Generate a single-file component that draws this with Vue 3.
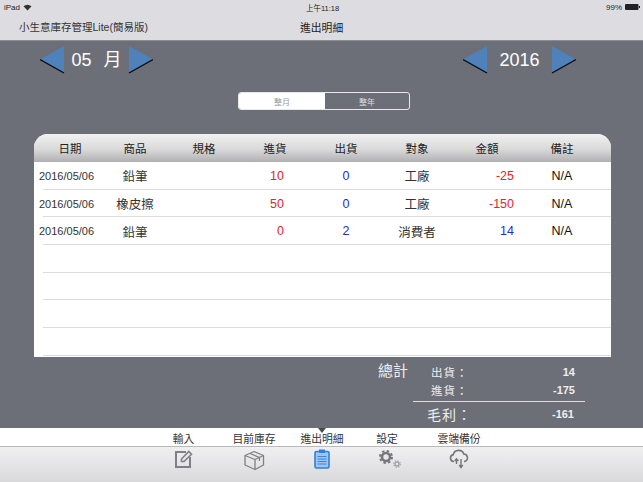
<template>
  <div class="page">
    <!-- 狀態列 -->
    <div class="status">
      <div class="status-left">
        <span>iPad</span>
        <svg width="9" height="7" viewBox="0 0 9 7"><path d="M0.5 2.2 A6 6 0 0 1 8.5 2.2 L4.5 6.5 Z" fill="#333" /></svg>
      </div>
      <span class="status-time">上午11:18</span>
      <div class="status-right">
        <span>99%</span>
        <svg width="15" height="6" viewBox="0 0 15 6"><rect x="0" y="0" width="13.5" height="6" rx="1" fill="#222" /><rect x="14" y="2" width="1" height="2" fill="#222" /></svg>
      </div>
    </div>
    <div class="titlebar">
      <span class="app-name">小生意庫存管理Lite(簡易版)</span>
      <span class="title">進出明細</span>
    </div>

    <div class="main">
      <div class="pickers">
        <div class="picker">
          <svg class="arrow" width="25" height="28" viewBox="0 0 25 28"><polygon points="0,13.5 24,0 24,27" fill="#4f82ba" /><path d="M0 13.5 L24 27" stroke="#0b0b0d" stroke-width="1.4" /></svg>
          <div class="month"><span>05</span><span>月</span></div>
          <svg class="arrow" width="25" height="28" viewBox="0 0 25 28"><polygon points="1,0 25,13.5 1,27" fill="#4f82ba" /><path d="M25 13.5 L1 27" stroke="#0b0b0d" stroke-width="1.4" /></svg>
        </div>
        <div class="picker">
          <svg class="arrow" width="25" height="28" viewBox="0 0 25 28"><polygon points="0,13.5 24,0 24,27" fill="#4f82ba" /><path d="M0 13.5 L24 27" stroke="#0b0b0d" stroke-width="1.4" /></svg>
          <span class="year">2016</span>
          <svg class="arrow" width="25" height="28" viewBox="0 0 25 28"><polygon points="1,0 25,13.5 1,27" fill="#4f82ba" /><path d="M25 13.5 L1 27" stroke="#0b0b0d" stroke-width="1.4" /></svg>
        </div>
      </div>

      <div class="segment">
        <div class="seg seg-on">整月</div>
        <div class="seg">整年</div>
      </div>

      <div class="table">
        <div class="row head">
          <span v-for="h in headers" :key="h">{{ h }}</span>
        </div>
        <div v-for="(r, i) in rows" :key="i" class="row line">
          <span class="date">{{ r.date }}</span>
          <span>{{ r.item }}</span>
          <span></span>
          <span class="in">{{ r.inQty }}</span>
          <span class="out">{{ r.outQty }}</span>
          <span>{{ r.who }}</span>
          <span class="amount" :class="r.amount < 0 ? 'neg' : 'pos'">{{ r.amount }}</span>
          <span class="note">N/A</span>
        </div>
        <div v-for="n in 4" :key="'e' + n" class="row line"></div>
      </div>

      <div class="summary">
        <div class="total-label">總計</div>
        <div class="total-box">
          <div class="total-row"><span class="k">出貨：</span><span>14</span></div>
          <div class="total-row"><span class="k">進貨：</span><span>-175</span></div>
          <div class="total-row profit"><span class="k">毛利：</span><span>-161</span></div>
        </div>
      </div>
    </div>

    <div class="tabs">
      <span class="pointer"></span>
      <div class="tab">
        <span>輸入</span>
        <svg width="20" height="20" viewBox="0 0 20 20" fill="none" stroke="#808084">
          <path d="M12 3 H2 V18 H16 V8" stroke-width="2" />
          <path d="M7.5 10 L14.8 2.5 L17.5 5.2 L10 12.5 H7.5 Z" stroke-width="1.6" />
        </svg>
      </div>
      <div class="tab">
        <span>目前庫存</span>
        <svg width="22" height="22" viewBox="0 0 22 22" fill="none" stroke="#808084" stroke-width="1.3" stroke-linejoin="round">
          <path d="M11 2.5 L20.5 6.5 V16 L12 20.5 L2 16 V6.5 Z" />
          <path d="M2 6.5 L12 10.5 L20.5 6.5 M12 10.5 V20.5 M7 4.5 L16.5 8.5 V12" />
        </svg>
      </div>
      <div class="tab">
        <span>進出明細</span>
        <svg width="20" height="20" viewBox="0 0 20 20">
          <rect x="3" y="2.5" width="14" height="16.5" rx="1.5" fill="#9cc5f2" stroke="#2f80d8" stroke-width="1.6" />
          <rect x="7" y="0.5" width="6" height="3.5" fill="#2f80d8" />
          <path d="M5.5 7.5 H14.5 M5.5 10 H14.5 M5.5 12.5 H14.5 M5.5 15 H14.5" stroke="#3f86d4" stroke-width="1" />
        </svg>
      </div>
      <div class="tab">
        <span>設定</span>
        <svg class="gear" width="22" height="20" viewBox="0 0 22 20" fill="none">
          <circle cx="7" cy="8" r="4" stroke="#77777b" stroke-width="2.6" />
          <circle cx="7" cy="8" r="6" stroke="#77777b" stroke-width="2" stroke-dasharray="2.4 2.31" />
          <circle cx="18" cy="15" r="2" stroke="#a3a3a7" stroke-width="1.4" />
          <circle cx="18" cy="15" r="3.3" stroke="#a3a3a7" stroke-width="1.2" stroke-dasharray="1.3 1.3" />
        </svg>
      </div>
      <div class="tab">
        <span>雲端備份</span>
        <svg width="20" height="20" viewBox="0 0 20 20" fill="none" stroke="#77777b">
          <path d="M5 12.5 H4.5 A3.5 3.5 0 0 1 4.3 5.6 A5.5 5.5 0 0 1 14.8 5 A3.8 3.8 0 0 1 15.5 12.5 H15" stroke-width="1.6" />
          <path d="M7.5 10 V15 M5.7 12 L7.5 9.8 L9.3 12" stroke-width="1.4" />
          <path d="M12 10 V18.5 M10.2 16 L12 18.6 L13.8 16" stroke-width="1.4" />
        </svg>
      </div>
    </div>
  </div>
</template>

<script setup>
const headers = ['日期', '商品', '規格', '進貨', '出貨', '對象', '金額', '備註']
const rows = [
  { date: '2016/05/06', item: '鉛筆', inQty: 10, outQty: 0, who: '工廠', amount: -25 },
  { date: '2016/05/06', item: '橡皮擦', inQty: 50, outQty: 0, who: '工廠', amount: -150 },
  { date: '2016/05/06', item: '鉛筆', inQty: 0, outQty: 2, who: '消費者', amount: 14 }
]
</script>

<style>
html, body { margin: 0; padding: 0; overflow: hidden; }
</style>

<style scoped>
.page {
  width: 643px;
  height: 482px;
  display: flex;
  flex-direction: column;
  font-family: "Liberation Sans", "Noto Sans CJK TC", sans-serif;
  color: #333;
  overflow: hidden;
}
.status {
  height: 14px;
  background: #dddde1;
  display: flex;
  justify-content: space-between;
  align-items: center;
  padding: 0 3px 0 4px;
  font-size: 8px;
  color: #222;
  position: relative;
}
.status-left, .status-right { display: flex; align-items: center; gap: 3px; }
.status-time { position: absolute; left: 306px; top: 2px; font-size: 7.5px; }
.titlebar {
  height: 26px;
  background: #dddde1;
  display: grid;
  grid-template-columns: 281px auto;
  align-items: center;
  padding-left: 19px;
  font-size: 10.5px;
  padding-bottom: 1px;
  box-sizing: border-box;
}
.title { font-size: 10.8px; color: #222; }
.main {
  height: 388px;
  flex: none;
  background: #6d6f78;
  border-top: 1px solid #8b8c92;
  box-sizing: border-box;
  padding-top: 5px;
}
.pickers {
  display: flex;
  justify-content: space-between;
  padding: 0 67px 0 40px;
  height: 28px;
}
.picker { display: flex; align-items: center; }
.arrow { display: block; flex: none; }
.month {
  width: 63px;
  display: flex;
  justify-content: center;
  align-items: baseline;
  gap: 12px;
  color: #fff;
  font-size: 18px;
  line-height: 22px;
  white-space: nowrap;
}
.year {
  width: 63px;
  text-align: center;
  color: #fff;
  font-size: 18px;
}
.segment {
  width: 172px;
  height: 18px;
  margin: 18px 0 0 238px;
  border: 1px solid #e8e8ea;
  border-radius: 3px;
  box-sizing: border-box;
  display: flex;
  font-size: 8px;
  overflow: hidden;
}
.seg {
  flex: 1;
  display: flex;
  align-items: center;
  justify-content: center;
  color: #ddd;
}
.seg-on { background: #fff; color: #999; flex: none; width: 86px; }
.table {
  width: 577px;
  margin: 24px 0 0 34px;
  background: #fff;
  border-radius: 14px 14px 0 0;
  overflow: hidden;
  height: 223px;
}
.row {
  display: grid;
  grid-template-columns: 72px 58px 80px 62px 80px 62px 78px 72px;
  align-items: center;
  text-align: center;
  font-size: 12.5px;
  color: #333;
  white-space: nowrap;
}
.head {
  height: 28px;
  background: linear-gradient(#f1f1f2, #d9d9da 55%, #b0b0b2);
  font-size: 11.5px;
  color: #222;
}
.line {
  height: 27.7px;
  box-sizing: border-box;
  position: relative;
}
.line::after {
  content: "";
  position: absolute;
  left: 9px;
  right: 0;
  bottom: 0;
  height: 1px;
  background: #dcdcdc;
}
.date { font-size: 11px; text-align: left; padding-left: 5px; }
.in { color: #e0252c; text-align: right; padding-right: 22px; }
.out { color: #2a2ad0; }
.amount { text-align: right; padding-right: 12px; }
.neg { color: #e8232b; }
.pos { color: #2a2ad0; }
.note { color: #111; }
.summary {
  display: flex;
  align-items: flex-start;
  margin: 5px 0 0 378px;
  color: #eee;
}
.total-label { font-size: 15px; line-height: 18px; width: 35px; }
.total-box { width: 172px; font-size: 11.5px; margin-top: 1px; }
.total-row {
  display: flex;
  justify-content: space-between;
  height: 18px;
  align-items: center;
  padding: 0 10px 0 18px;
}
.total-row span:last-child { font-weight: 700; font-size: 11px; }
.total-row .k { letter-spacing: 1px; }
.profit {
  border-top: 1px solid #ddd;
  height: 23px;
  margin-top: 2px;
  padding-left: 14px;
  padding-right: 11px;
}
.profit .k { font-size: 14px; letter-spacing: 1px; }
.tabs {
  flex: 1;
  position: relative;
  display: grid;
  grid-template-columns: 71px 70px 66px 64px 80px;
  justify-content: start;
  padding-left: 148px;
  background: linear-gradient(#fff 0, #fff 18px, #b9b9bb 18px, #b9b9bb 19px, #f0f0f1 19px, #d9d9dc 100%);
}
.pointer {
  position: absolute;
  left: 318px;
  top: 0;
  width: 0;
  height: 0;
  border-left: 4px solid transparent;
  border-right: 4px solid transparent;
  border-top: 5px solid #4a4b52;
}
.tab {
  display: flex;
  flex-direction: column;
  align-items: center;
  font-size: 10.8px;
  color: #333;
}
.tab span { height: 18px; line-height: 23px; white-space: nowrap; }
.tab svg { margin-top: 3px; display: block; }
.tab .gear { margin-left: 6px; }
</style>
